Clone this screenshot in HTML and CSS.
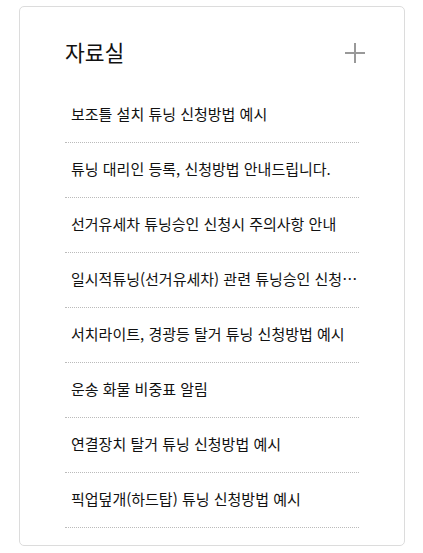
FILE: index.html
```html
<!DOCTYPE html>
<html lang="ko">
<head>
<meta charset="utf-8">
<title>자료실</title>
<link rel="stylesheet" href="styles.css">
</head>
<body>
<div class="card">
  <div class="card-head">
    <h2 class="card-title">자료실</h2>
    <a class="more" href="#" aria-label="더보기">
      <svg width="20" height="20" viewBox="0 0 20 20"><path d="M10 0V20M0 10H20" stroke="#999" stroke-width="2" fill="none"/></svg>
    </a>
  </div>
  <ul class="list">
    <li class="item">보조틀 설치 튜닝 신청방법 예시</li>
    <li class="item">튜닝 대리인 등록, 신청방법 안내드립니다.</li>
    <li class="item">선거유세차 튜닝승인 신청시 주의사항 안내</li>
    <li class="item">일시적튜닝(선거유세차) 관련 튜닝승인 신청방법 안내</li>
    <li class="item">서치라이트, 경광등 탈거 튜닝 신청방법 예시</li>
    <li class="item">운송 화물 비중표 알림</li>
    <li class="item">연결장치 탈거 튜닝 신청방법 예시</li>
    <li class="item">픽업덮개(하드탑) 튜닝 신청방법 예시</li>
  </ul>
</div>
</body>
</html>
```

FILE: styles.css
```css
html, body {
  margin: 0;
  padding: 0;
  background: #fff;
}
body {
  font-family: "Noto Sans CJK KR", "Noto Sans", sans-serif;
  color: #111;
}
.card {
  box-sizing: border-box;
  width: 386px;
  height: 540px;
  margin: 6px 0 0 19px;
  border: 1px solid #dcdcdc;
  border-radius: 5px;
  padding: 0 45px 0 45px;
  background: #fff;
}
.card-head {
  display: flex;
  align-items: center;
  justify-content: space-between;
  padding: 27px 0 18px;
}
.card-title {
  margin: 0;
  font-size: 21.5px;
  font-weight: 400;
  line-height: 36px;
  color: #111;
}
.more {
  display: flex;
  width: 20px;
  height: 20px;
  margin-right: -6px;
  margin-top: 2px;
}
.list {
  list-style: none;
  margin: 0;
  padding: 0;
}
.item {
  height: 54px;
  line-height: 52px;
  padding: 0 0 0 6px;
  border-bottom: 1px dotted #bbb;
  font-size: 15px;
  white-space: nowrap;
  overflow: hidden;
  text-overflow: ellipsis;
}
```
